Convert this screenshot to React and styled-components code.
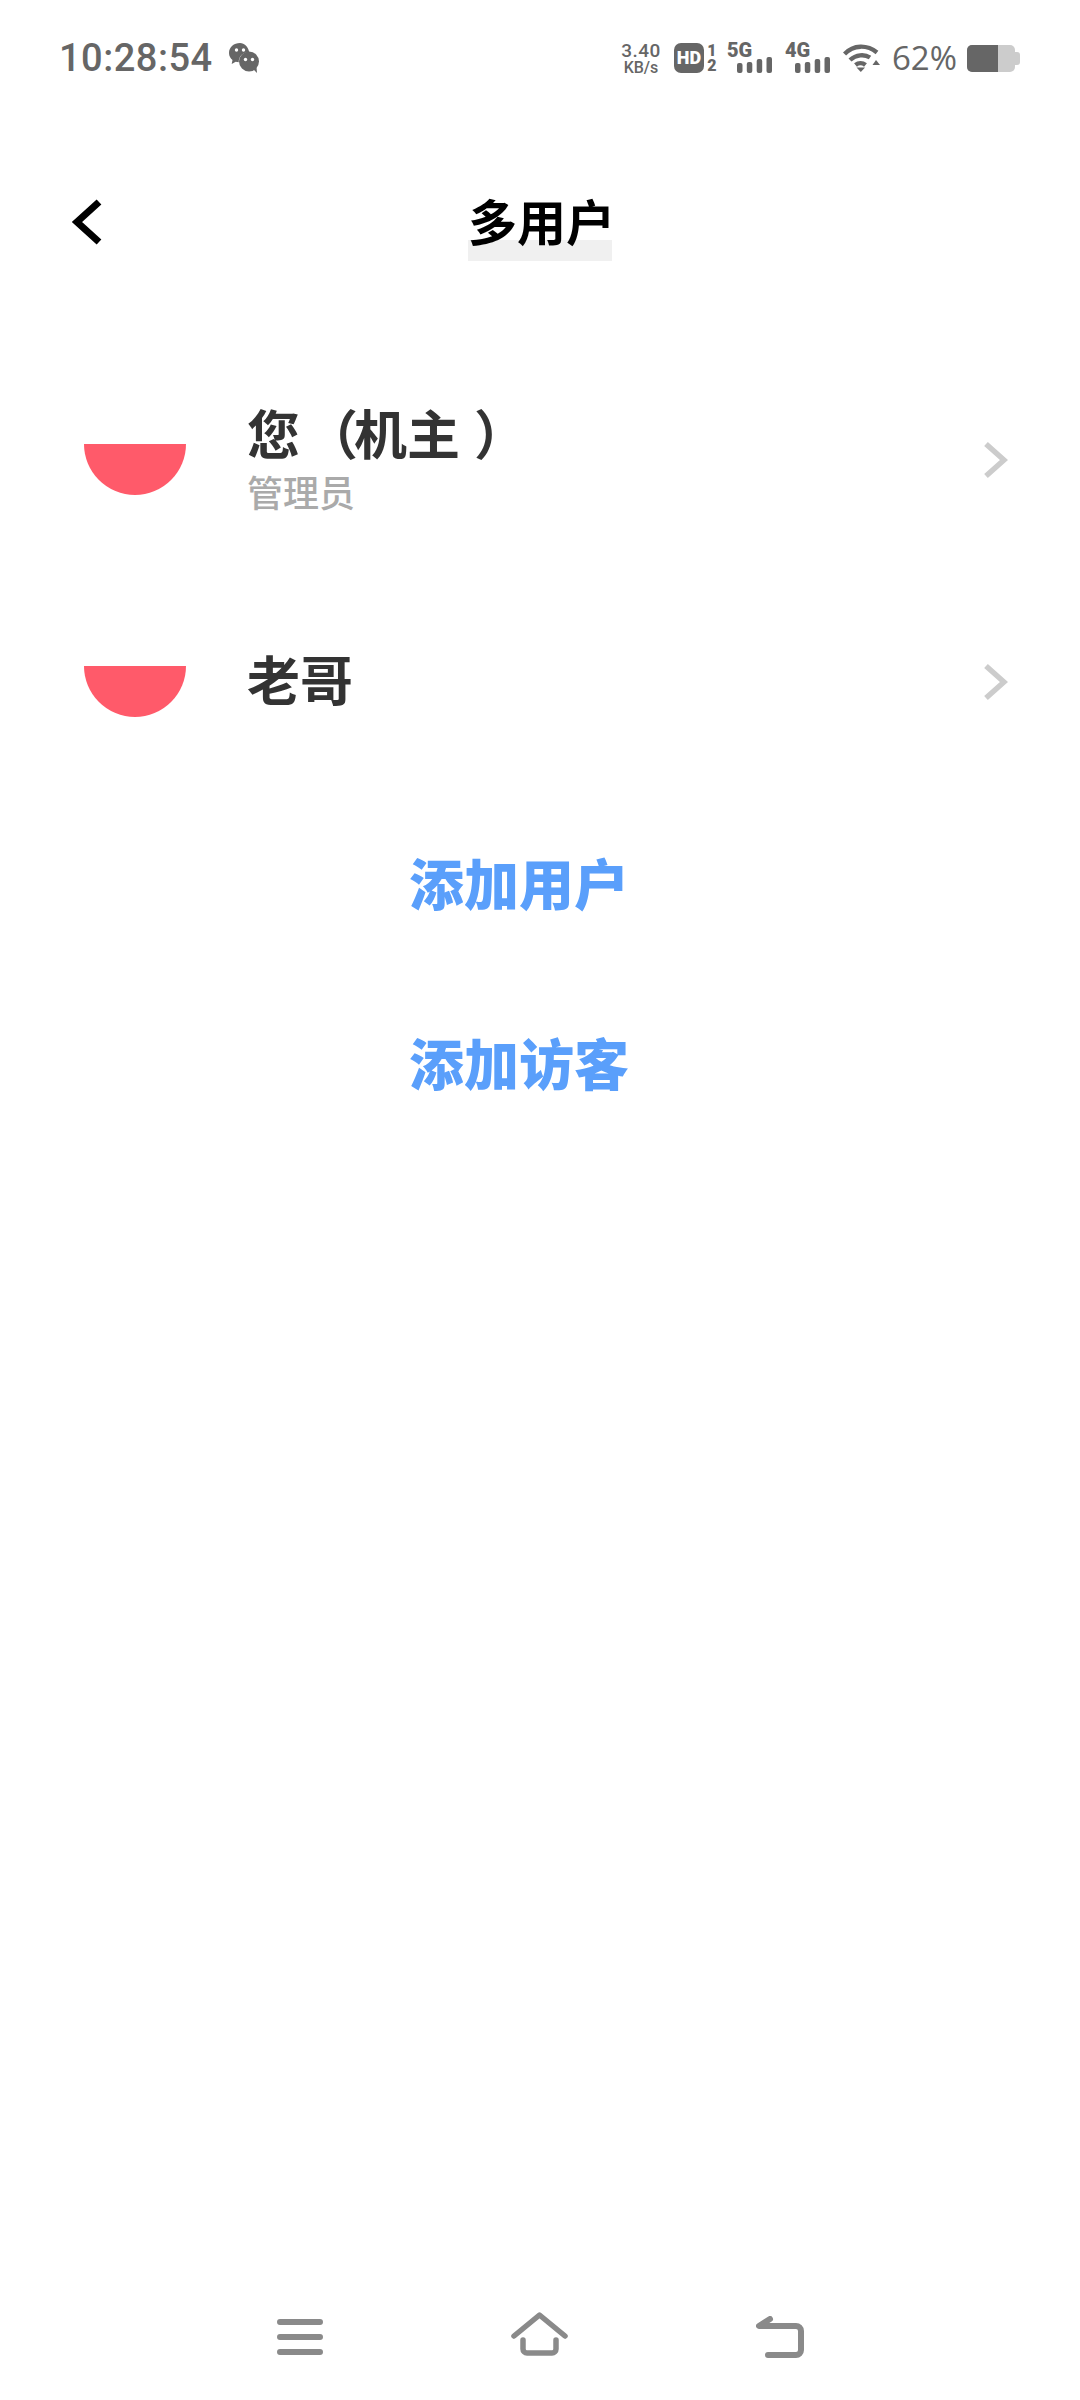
import React from 'react';
import styled, { createGlobalStyle } from 'styled-components';

const GlobalStyle = createGlobalStyle`
  html, body {
    margin: 0;
    background: #fff;
  }
  body {
    font-family: "Noto Sans CJK SC", "Noto Sans", sans-serif;
  }
`;

// brackets sit mid-cell in the reference font
const OpenParen = styled.span`
  margin: 0 -4px 0 5px;
`;

const CloseParen = styled.span`
  margin-left: 14px;
`;

const users = [
  { name: <>您<OpenParen>（</OpenParen>机主<CloseParen>）</CloseParen></>, id: 'owner', role: '管理员' },
  { name: '老哥', id: 'brother' },
];

const WeChatIcon = () => (
  <svg width="30" height="30" viewBox="0 0 30 30">
    <path d="M11 0C5 0 0 4 0 10c0 3 1.500 5.500 3.500 7l-.8 4 4-2.200c1 .3 2 .4 3 .4 0-6 4.500-10.200 10.500-10.200C19 3.500 15.500 0 11 0z" fill="#666" />
    <circle cx="20" cy="18.500" r="10" fill="#666" />
    <path d="M24 26l4 4-.5-6z" fill="#666" />
    <circle cx="7.500" cy="7" r="1.700" fill="#fff" />
    <circle cx="14.500" cy="7" r="1.700" fill="#fff" />
    <circle cx="16.500" cy="16.500" r="1.700" fill="#fff" />
    <circle cx="23.500" cy="16.500" r="1.700" fill="#fff" />
  </svg>
);

const SignalBars = () => (
  <svg width="35" height="16" viewBox="0 0 35 16" fill="#666">
    <rect x="0" y="6" width="5.500" height="10" rx="2" />
    <rect x="9.800" y="5" width="5.500" height="11" rx="2" />
    <rect x="19.700" y="2" width="5.500" height="14" rx="2" />
    <rect x="29.500" y="0" width="5.500" height="16" rx="2" />
  </svg>
);

const WifiIcon = () => (
  <svg width="37" height="28" viewBox="0 0 37 28" fill="none" stroke="#666" strokeWidth="4.400">
    <path d="M1.500 10C10.500 .5 24 .5 34 8.500" />
    <path d="M7 16C13 10.500 21.500 10 27 13.500" />
    <path d="M12.500 21c3-2.500 7-2.500 10 0" />
    <path d="M13.500 23.500h8.500L17.800 28z" fill="#666" stroke="none" />
    <path d="M29.500 21l3.500-5 4 5z" fill="#666" stroke="none" />
  </svg>
);

const BackIcon = () => (
  <svg width="32" height="46" viewBox="0 0 32 46" fill="none" stroke="#000" strokeWidth="7">
    <path d="M28 3L6 23l22 20" />
  </svg>
);

const ChevronIcon = () => (
  <svg width="25" height="38" viewBox="0 0 25 38" fill="none" stroke="#ccc" strokeWidth="5.500">
    <path d="M3 3l18 16L3 35" />
  </svg>
);

const MenuIcon = () => (
  <svg width="46" height="36" viewBox="0 0 46 36" fill="none" stroke="#8a8a8a" strokeWidth="6" strokeLinecap="round">
    <path d="M3 3h40M3 18h40M3 33h40" />
  </svg>
);

const HomeIcon = () => (
  <svg width="57" height="50" viewBox="0 0 57 50" fill="none" stroke="#8a8a8a" strokeWidth="5.500" strokeLinecap="round" strokeLinejoin="round">
    <path d="M3 24L28.500 3 54 24" />
    <path d="M12 28v9a4 4 0 0 0 4 4h25a4 4 0 0 0 4-4v-9" />
  </svg>
);

const ReturnIcon = () => (
  <svg width="48" height="42" viewBox="0 0 48 42" fill="none" stroke="#8a8a8a" strokeWidth="6" strokeLinecap="round" strokeLinejoin="round">
    <path d="M14 3L3 10h37a5 5 0 0 1 5 5v19a5 5 0 0 1-5 5H12" />
  </svg>
);

export default function App() {
  return (
    <>
      <GlobalStyle />
      <Page>
        <StatusBar>
          <StatusLeft>
            <Clock>10:28:54</Clock>
            <WeChatIcon />
          </StatusLeft>
          <StatusRight>
            <Speed>
              <span>3.40</span>
              <small>KB/s</small>
            </Speed>
            <HdBadge>HD</HdBadge>
            <SimSlots>
              <span>1</span>
              <span>2</span>
            </SimSlots>
            <Network>
              <span>5G</span>
              <SignalBars />
            </Network>
            <Network>
              <span>4G</span>
              <SignalBars />
            </Network>
            <WifiIcon />
            <BatteryText>62%</BatteryText>
            <Battery>
              <BatteryLevel style={{ width: '65%' }} />
            </Battery>
          </StatusRight>
        </StatusBar>

        <Header>
          <BackButton><BackIcon /></BackButton>
          <Title>多用户</Title>
        </Header>

        <UserList>
          {users.map((u) => (
            <UserRow key={u.id}>
              <Avatar />
              <UserInfo>
                <UserName>{u.name}</UserName>
                {u.role && <UserRole>{u.role}</UserRole>}
              </UserInfo>
              <ChevronIcon />
            </UserRow>
          ))}
        </UserList>

        <Actions>
          <ActionLink>添加用户</ActionLink>
          <ActionLink>添加访客</ActionLink>
        </Actions>

        <NavBar>
          <MenuIcon />
          <HomeIcon />
          <ReturnIcon />
        </NavBar>
      </Page>
    </>
  );
}

const Page = styled.div`
  width: 1080px;
  height: 2400px;
  display: flex;
  flex-direction: column;
  overflow: hidden;
  background: #fff;
`;

const StatusBar = styled.div`
  display: flex;
  justify-content: space-between;
  align-items: center;
  height: 30px;
  padding: 43px 60px 0 59px;
`;

const StatusLeft = styled.div`
  display: flex;
  align-items: center;
  gap: 16px;
`;

const Clock = styled.div`
  font-family: Roboto, sans-serif;
  font-size: 38px;
  font-weight: 500;
  line-height: 30px;
  letter-spacing: 0.5px;
  color: #666;
`;

const StatusRight = styled.div`
  display: flex;
  align-items: center;
  font-family: Roboto, sans-serif;
  color: #666;
`;

const Speed = styled.div`
  display: flex;
  flex-direction: column;
  align-items: center;
  width: 40px;
  margin-right: 13px;
  font-weight: 500;

  span {
    font-size: 19px;
    line-height: 19px;
    letter-spacing: 0.5px;
  }

  small {
    font-size: 16px;
    line-height: 15px;
  }
`;

const HdBadge = styled.div`
  width: 30px;
  height: 30px;
  margin-right: 3px;
  border-radius: 7px;
  background: #666;
  color: #fff;
  font-size: 18px;
  font-weight: 900;
  line-height: 30px;
  text-align: center;
`;

const SimSlots = styled.div`
  display: flex;
  flex-direction: column;
  align-items: center;
  width: 10px;
  margin-right: 10px;
  font-size: 16px;
  font-weight: 900;
  line-height: 15px;
`;

const Network = styled.div`
  display: flex;
  flex-direction: column;
  align-items: flex-start;
  width: 45px;
  margin-right: 13px;
  font-size: 20px;
  font-weight: 900;
  line-height: 14px;

  svg {
    display: block;
    margin-left: 10px;
  }
`;

const BatteryText = styled.div`
  width: 63px;
  margin: 0 12px;
  font-family: "Open Sans", sans-serif;
  font-size: 33px;
  line-height: 30px;
  white-space: nowrap;
`;

const Battery = styled.div`
  position: relative;
  width: 48px;
  height: 27px;
  margin-right: 5px;
  border-radius: 5px;
  background: #ccc;

  &::after {
    content: '';
    position: absolute;
    right: -5px;
    top: 7px;
    width: 5px;
    height: 13px;
    border-radius: 0 3px 3px 0;
    background: #ccc;
  }
`;

const BatteryLevel = styled.div`
  height: 100%;
  border-radius: 5px 0 0 5px;
  background: #666;
`;

const Header = styled.div`
  display: grid;
  grid-template-columns: 1fr auto 1fr;
  align-items: start;
  padding: 112px 0 0 71px;
`;

const BackButton = styled.div`
  display: flex;
  padding-top: 14px;
`;

const Title = styled.div`
  width: 144px;
  height: 76px;
  margin-right: 71px;
  font-size: 49px;
  font-weight: 700;
  line-height: 70px;
  color: #000;
  white-space: nowrap;
  background: linear-gradient(#f0f0f0, #f0f0f0) no-repeat 0 bottom / 100% 21px;
`;

const UserList = styled.div`
  display: flex;
  flex-direction: column;
  margin-top: 88px;
`;

const UserRow = styled.div`
  display: flex;
  align-items: center;
  height: 222px;
  padding: 0 72px 0 84px;
`;

const Avatar = styled.div`
  width: 102px;
  height: 51px;
  margin: 19px 61px 0 0;
  border-radius: 0 0 51px 51px;
  background: #ff5a6a;
`;

const UserInfo = styled.div`
  flex: 1;
  display: flex;
  flex-direction: column;
  padding-bottom: 9px;
`;

const UserName = styled.div`
  font-size: 53px;
  font-weight: 700;
  line-height: 70px;
  color: #333;
  white-space: nowrap;
`;

const UserRole = styled.div`
  font-size: 36px;
  font-weight: 500;
  line-height: 48px;
  color: #aaa;
`;

const Actions = styled.div`
  display: flex;
  flex-direction: column;
  gap: 110px;
  padding: 53px 0 0 409px;
`;

const ActionLink = styled.div`
  font-size: 55px;
  font-weight: 900;
  line-height: 70px;
  color: #5a9ffb;
`;

const NavBar = styled.div`
  display: flex;
  justify-content: center;
  align-items: center;
  gap: 188px;
  margin-top: auto;
  height: 126px;
`;
